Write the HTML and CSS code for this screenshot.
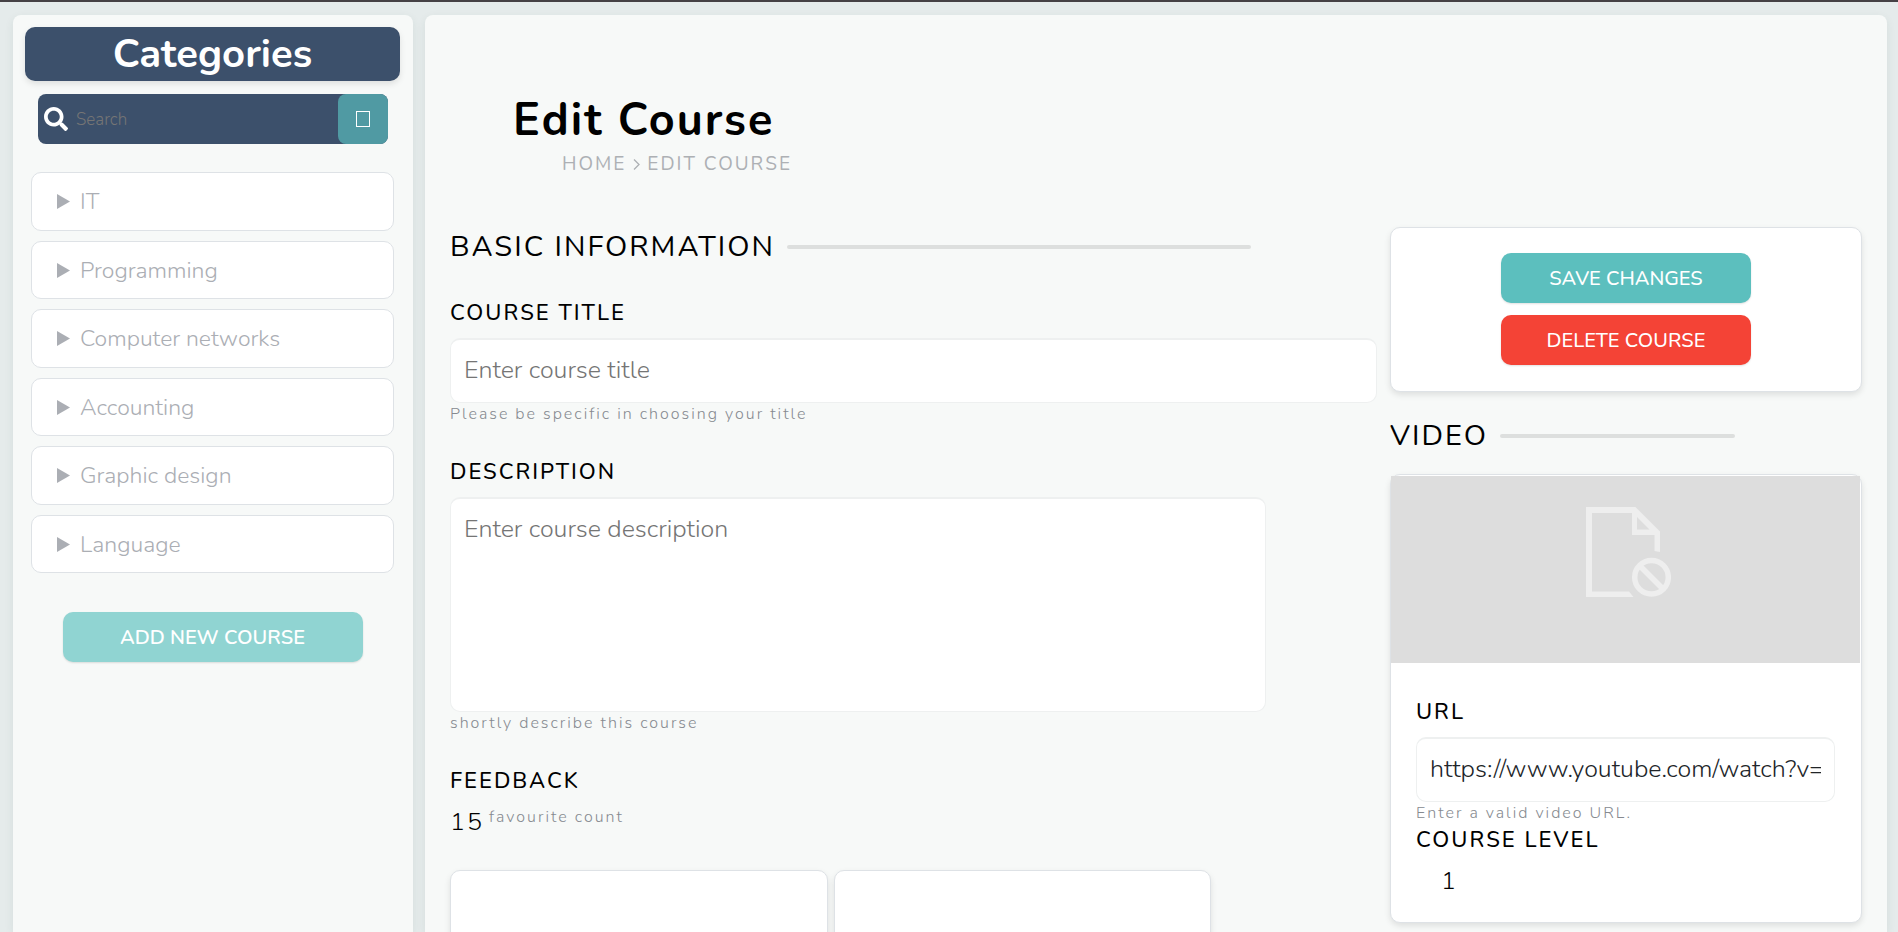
FILE: index.html
```html
<!DOCTYPE html>
<html lang="en">
<head>
<meta charset="utf-8">
<title>Edit Course</title>
<link rel="stylesheet" href="styles.css">
</head>
<body>
<div class="shell">
  <aside class="panel sidebar">
    <h2 class="sidebar-title">Categories</h2>
    <form class="search">
      <svg class="search-icon" viewBox="0 0 512 512" aria-hidden="true"><path fill="#fff" d="M505 442.7L405.3 343c-4.5-4.5-10.6-7-17-7H372c27.6-35.3 44-79.7 44-128C416 93.1 322.9 0 208 0S0 93.1 0 208s93.1 208 208 208c48.3 0 92.7-16.4 128-44v16.3c0 6.4 2.5 12.5 7 17l99.7 99.7c9.4 9.4 24.6 9.4 33.9 0l28.3-28.3c9.4-9.4 9.4-24.6.1-34zM208 336c-70.7 0-128-57.2-128-128 0-70.7 57.2-128 128-128 70.7 0 128 57.2 128 128 0 70.7-57.2 128-128 128z"/></svg>
      <input class="search-input" type="search" placeholder="Search" aria-label="Search">
      <button class="search-button" type="button" aria-label="Submit search"><svg class="search-glyph" viewBox="0 0 14 16"><rect x=".5" y=".5" width="13" height="15" fill="none" stroke="#fff"/></svg></button>
    </form>
    <nav class="categories">
      <button class="category" type="button"><svg class="marker" viewBox="0 0 13 15"><path d="M0 0l13 7.500L0 15z"/></svg>IT</button>
      <button class="category" type="button"><svg class="marker" viewBox="0 0 13 15"><path d="M0 0l13 7.500L0 15z"/></svg>Programming</button>
      <button class="category" type="button"><svg class="marker" viewBox="0 0 13 15"><path d="M0 0l13 7.500L0 15z"/></svg>Computer networks</button>
      <button class="category" type="button"><svg class="marker" viewBox="0 0 13 15"><path d="M0 0l13 7.500L0 15z"/></svg>Accounting</button>
      <button class="category" type="button"><svg class="marker" viewBox="0 0 13 15"><path d="M0 0l13 7.500L0 15z"/></svg>Graphic design</button>
      <button class="category" type="button"><svg class="marker" viewBox="0 0 13 15"><path d="M0 0l13 7.500L0 15z"/></svg>Language</button>
    </nav>
    <button class="button button-add" type="button">ADD NEW COURSE</button>
  </aside>

  <main class="panel content">
    <header class="page-header">
      <h1 class="page-title">Edit Course</h1>
      <nav class="breadcrumb" aria-label="Breadcrumb">
        <a href="#">HOME</a>
        <svg width="7" height="11" viewBox="0 0 7 11" fill="none" stroke="#adb0b4" stroke-width="1.300" aria-hidden="true"><path d="M1 .5l5 5-5 5"/></svg>
        <span>EDIT COURSE</span>
      </nav>
    </header>
    <div class="columns">
      <section class="details">
        <h2 class="section-title basic-title">BASIC INFORMATION</h2>
        <div class="field">
          <label class="label" for="title">COURSE TITLE</label>
          <input class="control" id="title" type="text" placeholder="Enter course title">
          <p class="hint">Please be specific in choosing your title</p>
        </div>
        <div class="field">
          <label class="label" for="description">DESCRIPTION</label>
          <textarea class="control description" id="description" placeholder="Enter course description"></textarea>
          <p class="hint">shortly describe this course</p>
        </div>
        <div class="field">
          <h3 class="label">FEEDBACK</h3>
          <p class="feedback"><span>15</span><span class="hint">favourite count</span></p>
        </div>
        <div class="feedback-cards">
          <div class="card"></div>
          <div class="card"></div>
        </div>
      </section>
      <section class="side">
        <div class="card actions">
          <button class="button button-save" type="button">SAVE CHANGES</button>
          <button class="button button-delete" type="button">DELETE COURSE</button>
        </div>
        <h2 class="section-title video-title">VIDEO</h2>
        <div class="card video">
          <div class="video-preview">
            <svg class="no-file" viewBox="0 0 85 90" role="img" aria-label="No preview">
              <path fill="#eee" fill-rule="evenodd" d="M0 0H49.500L74 24.500V45L68.500 44V28H46V6H6V84.500H43L47.500 90H0zM51 10V22.500H63.500z"/>
              <g fill="none" stroke="#eee" stroke-width="5.500">
                <circle cx="65.500" cy="70.300" r="16.800"/>
                <path d="M54 59l23 23"/>
              </g>
            </svg>
          </div>
          <div class="video-form">
            <label class="label" for="url">URL</label>
            <input class="control" id="url" type="text" value="https://www.youtube.com/watch?v=course">
            <p class="hint">Enter a valid video URL.</p>
            <h3 class="label">COURSE LEVEL</h3>
            <p class="level">1</p>
          </div>
        </div>
      </section>
    </div>
  </main>
</div>
</body>
</html>
```
FILE: styles.css
```css
* {
  box-sizing: border-box;
}

body,
h1,
h2,
h3,
p {
  margin: 0;
}

body,
button,
input,
textarea {
  font-family: Nunito, Lato, "Open Sans", sans-serif;
}

body {
  background: #e5ebeb;
  color: #000;
}

button {
  cursor: pointer;
}

.shell {
  display: flex;
  gap: 12px;
  height: 100vh;
  padding: 13px 11px 0 13px;
  overflow: hidden;
  border-top: 2px solid #454145;
}

.panel {
  background: #f7f9f8;
  border-radius: 8px 8px 0 0;
  box-shadow: 0 3px 10px rgba(40, 80, 70, 0.08);
}

.sidebar {
  display: flex;
  flex: 0 0 400px;
  flex-direction: column;
  padding: 12px 13px 12px 12px;
}

.sidebar-title {
  border-radius: 10px;
  background: #3c506b;
  box-shadow: 0 3px 6px rgba(0, 0, 0, 0.1);
  color: #fff;
  font-size: 40px;
  font-weight: 700;
  line-height: 54px;
  text-align: center;
}

.search {
  display: flex;
  align-items: center;
  height: 50px;
  margin: 13px 12px 0 13px;
  padding-left: 6px;
  border-radius: 8px;
  background: #3c506b;
}

.search-icon {
  width: 24px;
  height: 24px;
}

.search-input {
  flex: 1;
  min-width: 0;
  padding: 0 8px;
  border: 0;
  background: transparent;
  color: #fff;
  font-size: 17px;
  font-weight: 300;
}

.search-input::placeholder {
  color: #757575;
}

.search-button {
  width: 50px;
  height: 50px;
  padding: 0;
  border: 0;
  border-radius: 8px;
  background: #509aa3;
}

.search-glyph {
  display: block;
  width: 14px;
  height: 16px;
  margin: 0 auto;
}

.categories {
  display: grid;
  grid-auto-rows: 1fr;
  gap: 10px;
  min-height: 401px;
  margin: 28px 6px 0;
}

.category {
  display: flex;
  align-items: center;
  gap: 10px;
  padding: 1px 25px 0;
  border: 1px solid #dee2e6;
  border-radius: 10px;
  background: #fff;
  color: #abaeb4;
  font-size: 23px;
  font-weight: 300;
}

.marker {
  width: 13px;
  height: 15px;
  fill: #abaeb4;
}

.button {
  height: 50px;
  border: 0;
  border-radius: 10px;
  box-shadow: 0 1px 2px rgba(0, 0, 0, 0.12);
  color: #fff;
  font-size: 20px;
  font-weight: 500;
}

.button-add {
  width: 300px;
  margin: 39px auto 0;
  background: #90d4d2;
  font-weight: 600;
}

.button-save {
  background: #5cbfbe;
}

.button-delete {
  background: #f44336;
}

.content {
  flex: 1;
  min-width: 0;
  padding: 75px 25px 0;
}

.page-header {
  padding-left: 63px;
}

.page-title {
  font-size: 45px;
  font-weight: 700;
  letter-spacing: 2px;
  line-height: 62px;
}

.breadcrumb {
  display: flex;
  align-items: center;
  gap: 7px;
  padding-left: 49px;
  color: #adb0b4;
  font-size: 19px;
  letter-spacing: 2px;
  line-height: 24px;
}

.breadcrumb a {
  color: inherit;
  text-decoration: none;
}

.columns {
  display: grid;
  grid-template-columns: 927fr 472fr;
  align-items: start;
  gap: 13px;
  margin-top: 51px;
}

.section-title {
  display: flex;
  align-items: center;
  gap: 12px;
  font-size: 29px;
  font-weight: 400;
  letter-spacing: 2px;
  line-height: 40px;
}

.section-title::after {
  content: "";
  flex: 1;
  height: 4px;
  border-radius: 2px;
  background: #dddfde;
}

.basic-title {
  width: 86.4%;
}

.video-title {
  width: 73%;
  margin: 24px 0 18px;
}

.field {
  margin-top: 31px;
}

.basic-title + .field {
  margin-top: 30px;
}

.label {
  display: block;
  margin-bottom: 9px;
  font-size: 22px;
  font-weight: 500;
  letter-spacing: 2px;
  line-height: 32px;
}

.control {
  display: block;
  width: 100%;
  height: 65px;
  padding: 0 13px 3px;
  border: 1px solid #eef0f0;
  border-top-width: 2px;
  border-radius: 10px;
  background: #fff;
  color: #212529;
  font-size: 25px;
  font-weight: 300;
}

.control::placeholder {
  color: #757575;
}

.description {
  width: 88%;
  height: 215px;
  padding-top: 13px;
  resize: none;
}

.hint {
  color: #868a90;
  font-size: 16px;
  font-weight: 300;
  letter-spacing: 2px;
  line-height: 22px;
}

.feedback {
  display: flex;
  gap: 5px;
  font-size: 25px;
  font-weight: 300;
  letter-spacing: 2px;
  line-height: 32px;
}

.feedback-cards {
  display: grid;
  grid-template-columns: 1fr 1fr;
  gap: 6px;
  width: 82.1%;
  margin-top: 32px;
}

.card {
  min-height: 120px;
  border: 1px solid #dee2e6;
  border-radius: 10px;
  background: #fff;
  box-shadow: 0 3px 6px rgba(0, 0, 0, 0.1);
}

.actions {
  display: flex;
  flex-direction: column;
  align-items: center;
  gap: 12px;
  padding: 25px 25px 26px;
}

.actions .button {
  width: 250px;
}

.video {
  padding: 1px 1px 0 0;
}

.video-preview {
  display: flex;
  justify-content: center;
  height: 187px;
  padding: 31px 0 0 5px;
  background: #ddd;
}

.no-file {
  width: 85px;
  height: 90px;
}

.video-form {
  padding: 33px 25px 24px;
}

.video-form .hint + .label {
  margin-bottom: 8px;
}

.level {
  padding-left: 25px;
  font-size: 25px;
  font-weight: 300;
  line-height: 34px;
}
```
